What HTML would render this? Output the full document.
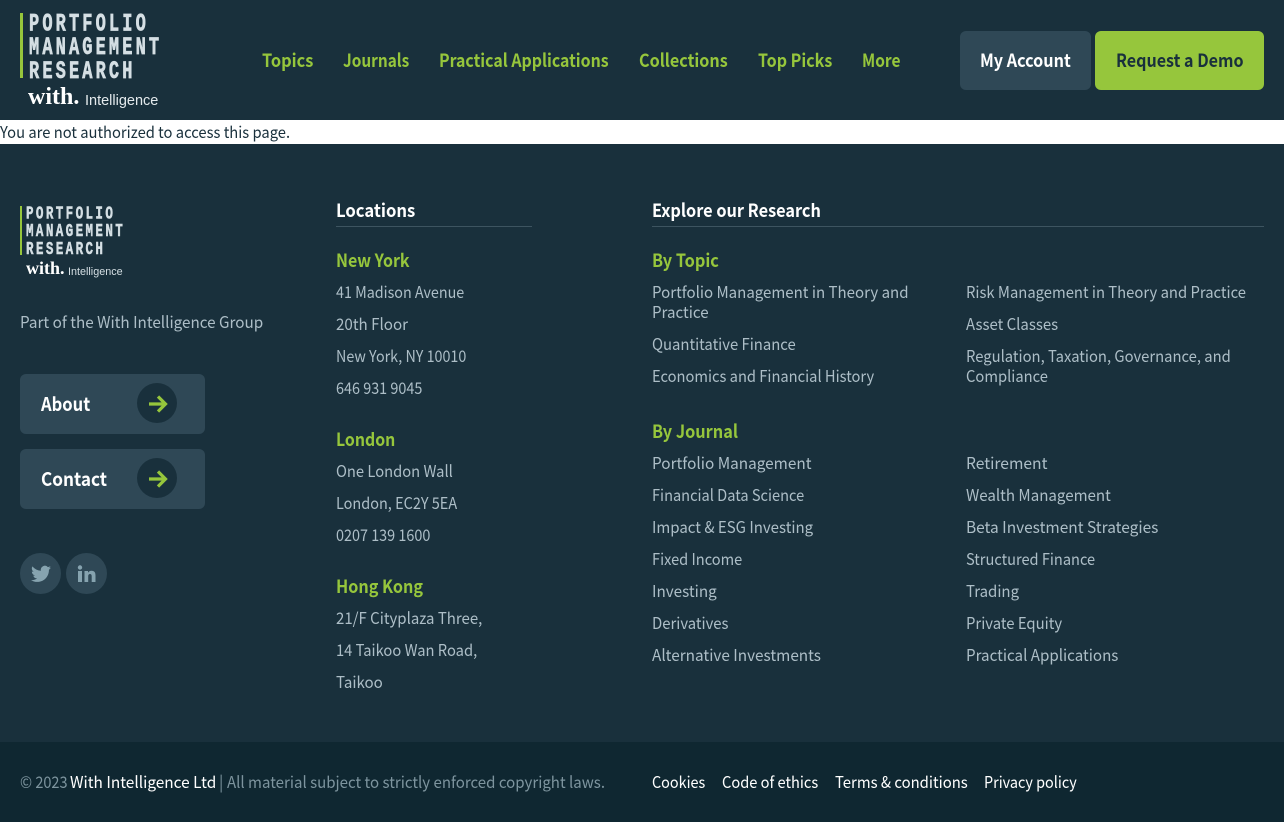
<!DOCTYPE html>
<html><head><meta charset="utf-8"><style>
html,body{margin:0;padding:0}
body{width:1284px;height:822px;position:relative;overflow:hidden;background:#19303c;font-family:"Noto Sans CJK JP","Liberation Sans",sans-serif;font-size:16px;color:#adbec7}
.t{position:absolute;white-space:nowrap;line-height:20px;transform-origin:0 50%}
.n{font-size:18px;font-weight:700;color:#96c63c;top:50px}
.h{font-size:18px;font-weight:700;color:#fff}
.g{font-size:18px;font-weight:700;color:#96c63c}
.b{position:absolute;border-radius:6px;background:#2f4856}
.w{color:#fff}
.a{position:absolute;width:40px;height:40px;border-radius:50%;background:#19303c}
.s{position:absolute;width:41px;height:41px;border-radius:50%;background:#2f4856}
svg{position:absolute;overflow:visible}
</style></head><body>
<svg style="left:0;top:0" width="200" height="120">
<rect x="20" y="13" width="3" height="65" fill="#96c63c"/>
<g font-family="Liberation Mono" font-weight="700" font-size="25" fill="#d5dfe4" stroke="#d5dfe4" stroke-width=".7">
<text transform="translate(29,30.5) scale(.68,1)" letter-spacing="4.6">PORTFOLIO</text>
<text transform="translate(29,54) scale(.68,1)" letter-spacing="4.6">MANAGEMENT</text>
<text transform="translate(29,78) scale(.68,1)" letter-spacing="4.6">RESEARCH</text>
</g>
<text x="28" y="104" font-family="Liberation Serif" font-weight="700" font-size="24" fill="#fff">with.</text>
<text x="85" y="105" font-family="Liberation Sans" font-size="14.5" fill="#e4eaed">Intelligence</text>
</svg>
<div class="t n" style="left:262px;transform:scaleX(.909)">Topics</div>
<div class="t n" style="left:343px;transform:scaleX(.854)">Journals</div>
<div class="t n" style="left:439px;transform:scaleX(.883)">Practical Applications</div>
<div class="t n" style="left:639px;transform:scaleX(.897)">Collections</div>
<div class="t n" style="left:758px;transform:scaleX(.89)">Top Picks</div>
<div class="t n" style="left:862px;transform:scaleX(.861)">More</div>
<div class="b" style="left:960px;top:31px;width:131px;height:59px"></div>
<div class="t n" style="left:980px;color:#fff;transform:scaleX(.898)">My Account</div>
<div class="b" style="left:1095px;top:31px;width:169px;height:59px;background:#96c63c"></div>
<div class="t n" style="left:1116px;color:#19303c;transform:scaleX(.893)">Request a Demo</div>

<div style="position:absolute;left:0;top:120px;width:1284px;height:24px;background:#fff"></div>
<div class="t" style="left:0;top:121px;color:#19303c;transform:scaleX(.922)">You are not authorized to access this page.</div>

<svg style="left:0;top:0" width="200" height="300">
<rect x="20" y="206" width="2" height="49" fill="#96c63c"/>
<g font-family="Liberation Mono" font-weight="700" font-size="18.5" fill="#d5dfe4" stroke="#d5dfe4" stroke-width=".5">
<text transform="translate(26,218.5) scale(.68,1)" letter-spacing="3.5">PORTFOLIO</text>
<text transform="translate(26,236) scale(.68,1)" letter-spacing="3.5">MANAGEMENT</text>
<text transform="translate(26,254) scale(.68,1)" letter-spacing="3.5">RESEARCH</text>
</g>
<text x="26" y="274" font-family="Liberation Serif" font-weight="700" font-size="18" fill="#fff">with.</text>
<text x="68" y="275" font-family="Liberation Sans" font-size="10.8" fill="#d5dfe4">Intelligence</text>
</svg>
<div class="t" style="left:20px;top:311px;transform:scaleX(.953)">Part of the With Intelligence Group</div>

<div class="b" style="left:20px;top:374px;width:185px;height:60px"></div>
<div class="t n" style="left:41px;top:394px;color:#fff;font-size:19px;transform:scaleX(.872)">About</div>
<div class="a" style="left:137px;top:383px"></div>
<svg style="left:137px;top:383px" width="40" height="40"><path d="M12 21H28M21 13.5L28.500 21L21 28.500" fill="none" stroke="#96c63c" stroke-width="3.2"/></svg>
<div class="b" style="left:20px;top:449px;width:185px;height:60px"></div>
<div class="t n" style="left:41px;top:469px;color:#fff;font-size:19px;transform:scaleX(.903)">Contact</div>
<div class="a" style="left:137px;top:458px"></div>
<svg style="left:137px;top:458px" width="40" height="40"><path d="M12 21H28M21 13.5L28.500 21L21 28.500" fill="none" stroke="#96c63c" stroke-width="3.2"/></svg>

<div class="s" style="left:20px;top:553px"></div>
<svg style="left:31px;top:565px" width="20" height="18" viewBox="0 0 24 20"><path fill="#86a3af" d="M24 2.4a10 10 0 0 1-2.800.800 5 5 0 0 0 2.200-2.700 10 10 0 0 1-3.100 1.200A4.900 4.900 0 0 0 11.900 6.100 14 14 0 0 1 1.700.900a4.900 4.900 0 0 0 1.500 6.600 4.900 4.900 0 0 1-2.200-.600 4.900 4.900 0 0 0 3.900 4.900 5 5 0 0 1-2.200.100 4.900 4.900 0 0 0 4.600 3.400A9.900 9.900 0 0 1 0 17.300 14 14 0 0 0 7.500 19.500c9.100 0 14.300-7.700 14-14.600A10 10 0 0 0 24 2.400z"/></svg>
<div class="s" style="left:66px;top:553px"></div>
<svg style="left:78px;top:565px" width="18" height="18" viewBox="0 0 18 18"><g fill="#86a3af"><rect x="0" y="6" width="4" height="11"/><circle cx="2" cy="2.500" r="2.200"/><path d="M6.500 6H10V7.700C10.800 6.500 12 5.800 13.500 5.800C16.500 5.800 17.500 7.700 17.500 10.500V17H13.700V11.200C13.700 9.800 13.200 9 12 9C10.800 9 10.200 9.900 10.200 11.200V17H6.500Z"/></g></svg>

<div class="t h" style="left:336px;top:200px;transform:scaleX(.925)">Locations</div>
<div style="position:absolute;left:336px;top:226px;width:196px;height:1px;background:#3d5460"></div>
<div class="t g" style="left:336px;top:250px;transform:scaleX(.888)">New York</div>
<div class="t" style="left:336px;top:281px;transform:scaleX(.895)">41 Madison Avenue</div>
<div class="t" style="left:336px;top:313px;transform:scaleX(.947)">20th Floor</div>
<div class="t" style="left:336px;top:345px;transform:scaleX(.894)">New York, NY 10010</div>
<div class="t" style="left:336px;top:377px;transform:scaleX(.9)">646 931 9045</div>
<div class="t g" style="left:336px;top:429px;transform:scaleX(.88)">London</div>
<div class="t" style="left:336px;top:460px;transform:scaleX(.921)">One London Wall</div>
<div class="t" style="left:336px;top:492px;transform:scaleX(.904)">London, EC2Y 5EA</div>
<div class="t" style="left:336px;top:524px;transform:scaleX(.9)">0207 139 1600</div>
<div class="t g" style="left:336px;top:576px;transform:scaleX(.898)">Hong Kong</div>
<div class="t" style="left:336px;top:607px;transform:scaleX(.937)">21/F Cityplaza Three,</div>
<div class="t" style="left:336px;top:639px;transform:scaleX(.92)">14 Taikoo Wan Road,</div>
<div class="t" style="left:336px;top:671px;transform:scaleX(.944)">Taikoo</div>

<div class="t h" style="left:652px;top:200px;transform:scaleX(.905)">Explore our Research</div>
<div style="position:absolute;left:652px;top:226px;width:612px;height:1px;background:#3d5460"></div>
<div class="t g" style="left:652px;top:250px;transform:scaleX(.905)">By Topic</div>
<div class="t" style="left:652px;top:281px;transform:scaleX(.94)">Portfolio Management in Theory and</div>
<div class="t" style="left:652px;top:301px;transform:scaleX(.944)">Practice</div>
<div class="t" style="left:652px;top:333px;transform:scaleX(.929)">Quantitative Finance</div>
<div class="t" style="left:652px;top:365px;transform:scaleX(.918)">Economics and Financial History</div>
<div class="t" style="left:966px;top:281px;transform:scaleX(.926)">Risk Management in Theory and Practice</div>
<div class="t" style="left:966px;top:313px;transform:scaleX(.935)">Asset Classes</div>
<div class="t" style="left:966px;top:345px;transform:scaleX(.925)">Regulation, Taxation, Governance, and</div>
<div class="t" style="left:966px;top:365px;transform:scaleX(.921)">Compliance</div>
<div class="t g" style="left:652px;top:421px;transform:scaleX(.905)">By Journal</div>
<div class="t" style="left:652px;top:452px;transform:scaleX(.958)">Portfolio Management</div>
<div class="t" style="left:652px;top:484px;transform:scaleX(.912)">Financial Data Science</div>
<div class="t" style="left:652px;top:516px;transform:scaleX(.938)">Impact &amp; ESG Investing</div>
<div class="t" style="left:652px;top:548px;transform:scaleX(.913)">Fixed Income</div>
<div class="t" style="left:652px;top:580px;transform:scaleX(.953)">Investing</div>
<div class="t" style="left:652px;top:612px;transform:scaleX(.929)">Derivatives</div>
<div class="t" style="left:652px;top:644px;transform:scaleX(.958)">Alternative Investments</div>
<div class="t" style="left:966px;top:452px;transform:scaleX(.976)">Retirement</div>
<div class="t" style="left:966px;top:484px;transform:scaleX(.944)">Wealth Management</div>
<div class="t" style="left:966px;top:516px;transform:scaleX(.966)">Beta Investment Strategies</div>
<div class="t" style="left:966px;top:548px;transform:scaleX(.912)">Structured Finance</div>
<div class="t" style="left:966px;top:580px;transform:scaleX(.936)">Trading</div>
<div class="t" style="left:966px;top:612px;transform:scaleX(.93)">Private Equity</div>
<div class="t" style="left:966px;top:644px;transform:scaleX(.946)">Practical Applications</div>

<div style="position:absolute;left:0;top:742px;width:1284px;height:80px;background:#0f2731"></div>
<div class="t" style="left:20px;top:771px;color:#7d949e;transform:scaleX(.907)">© 2023</div>
<div class="t w" style="left:70px;top:771px;transform:scaleX(.962)">With Intelligence Ltd</div>
<div class="t" style="left:219px;top:771px;color:#7d949e">|</div>
<div class="t" style="left:227px;top:771px;color:#7d949e;transform:scaleX(.94)">All material subject to strictly enforced copyright laws.</div>
<div class="t w" style="left:652px;top:771px;transform:scaleX(.9)">Cookies</div>
<div class="t w" style="left:722px;top:771px;transform:scaleX(.914)">Code of ethics</div>
<div class="t w" style="left:835px;top:771px;transform:scaleX(.93)">Terms &amp; conditions</div>
<div class="t w" style="left:984px;top:771px;transform:scaleX(.9)">Privacy policy</div>
</body></html>
